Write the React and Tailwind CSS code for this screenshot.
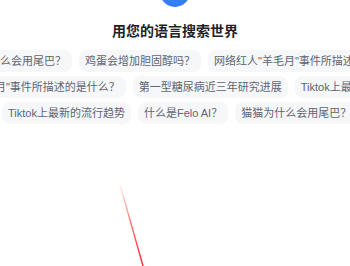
import React from "react";

const rows = [
  {
    offset: "-ml-[50px]",
    items: ["猫猫为什么会用尾巴？", "鸡蛋会增加胆固醇吗？", "网络红人\"羊毛月\"事件所描述的是什么？"],
  },
  {
    offset: "-ml-[81px]",
    items: ["网络红人\"羊毛月\"事件所描述的是什么？", "第一型糖尿病近三年研究进展", "Tiktok上最新的流行趋势"],
  },
  {
    offset: "ml-[2px]",
    items: ["Tiktok上最新的流行趋势", "什么是Felo AI？", "猫猫为什么会用尾巴？", "鸡蛋会增加胆固醇吗？"],
  },
];

const App = () => {
  return (
    <div
      className="relative w-[350px] h-[266px] bg-white overflow-hidden flex flex-col items-center"
      style={{ fontFamily: '"Liberation Sans", "Noto Sans CJK SC", sans-serif' }}
    >
      {/* logo */}
      <div className="w-[30px] h-[30px] -mt-[23px] rounded-full bg-gradient-to-b from-[#4a8ff8] to-[#2f7bf5] shrink-0" />

      <h1 className="mt-[14px] text-[14px] leading-[20px] font-semibold text-[#1f2329]">
        用您的语言搜索世界
      </h1>

      {/* suggestion rows */}
      <div className="mt-[9px] w-full flex flex-col gap-[4px]">
        {rows.map((row, i) => (
          <div key={i} className={`flex gap-[7px] whitespace-nowrap ${row.offset}`}>
            {row.items.map((t, j) => (
              <span
                key={j}
                className="shrink-0 h-[22px] px-[6px] flex items-center rounded-lg bg-[#f6f7f9] text-[11px] text-[#5f6470]"
              >
                {t}
              </span>
            ))}
          </div>
        ))}
      </div>

      {/* red streak */}
      <svg className="absolute left-0 top-0 pointer-events-none" width="350" height="266">
        <defs>
          <linearGradient id="streak" x1="119" y1="181" x2="143" y2="266" gradientUnits="userSpaceOnUse">
            <stop offset="0" stopColor="#ff3b30" stopOpacity="0" />
            <stop offset="0.5" stopColor="#ff3b30" stopOpacity="0.7" />
            <stop offset="1" stopColor="#f5222d" stopOpacity="1" />
          </linearGradient>
        </defs>
        <line x1="119" y1="181" x2="143" y2="266" stroke="url(#streak)" strokeWidth="1.4" />
      </svg>
    </div>
  );
};

export default App;
